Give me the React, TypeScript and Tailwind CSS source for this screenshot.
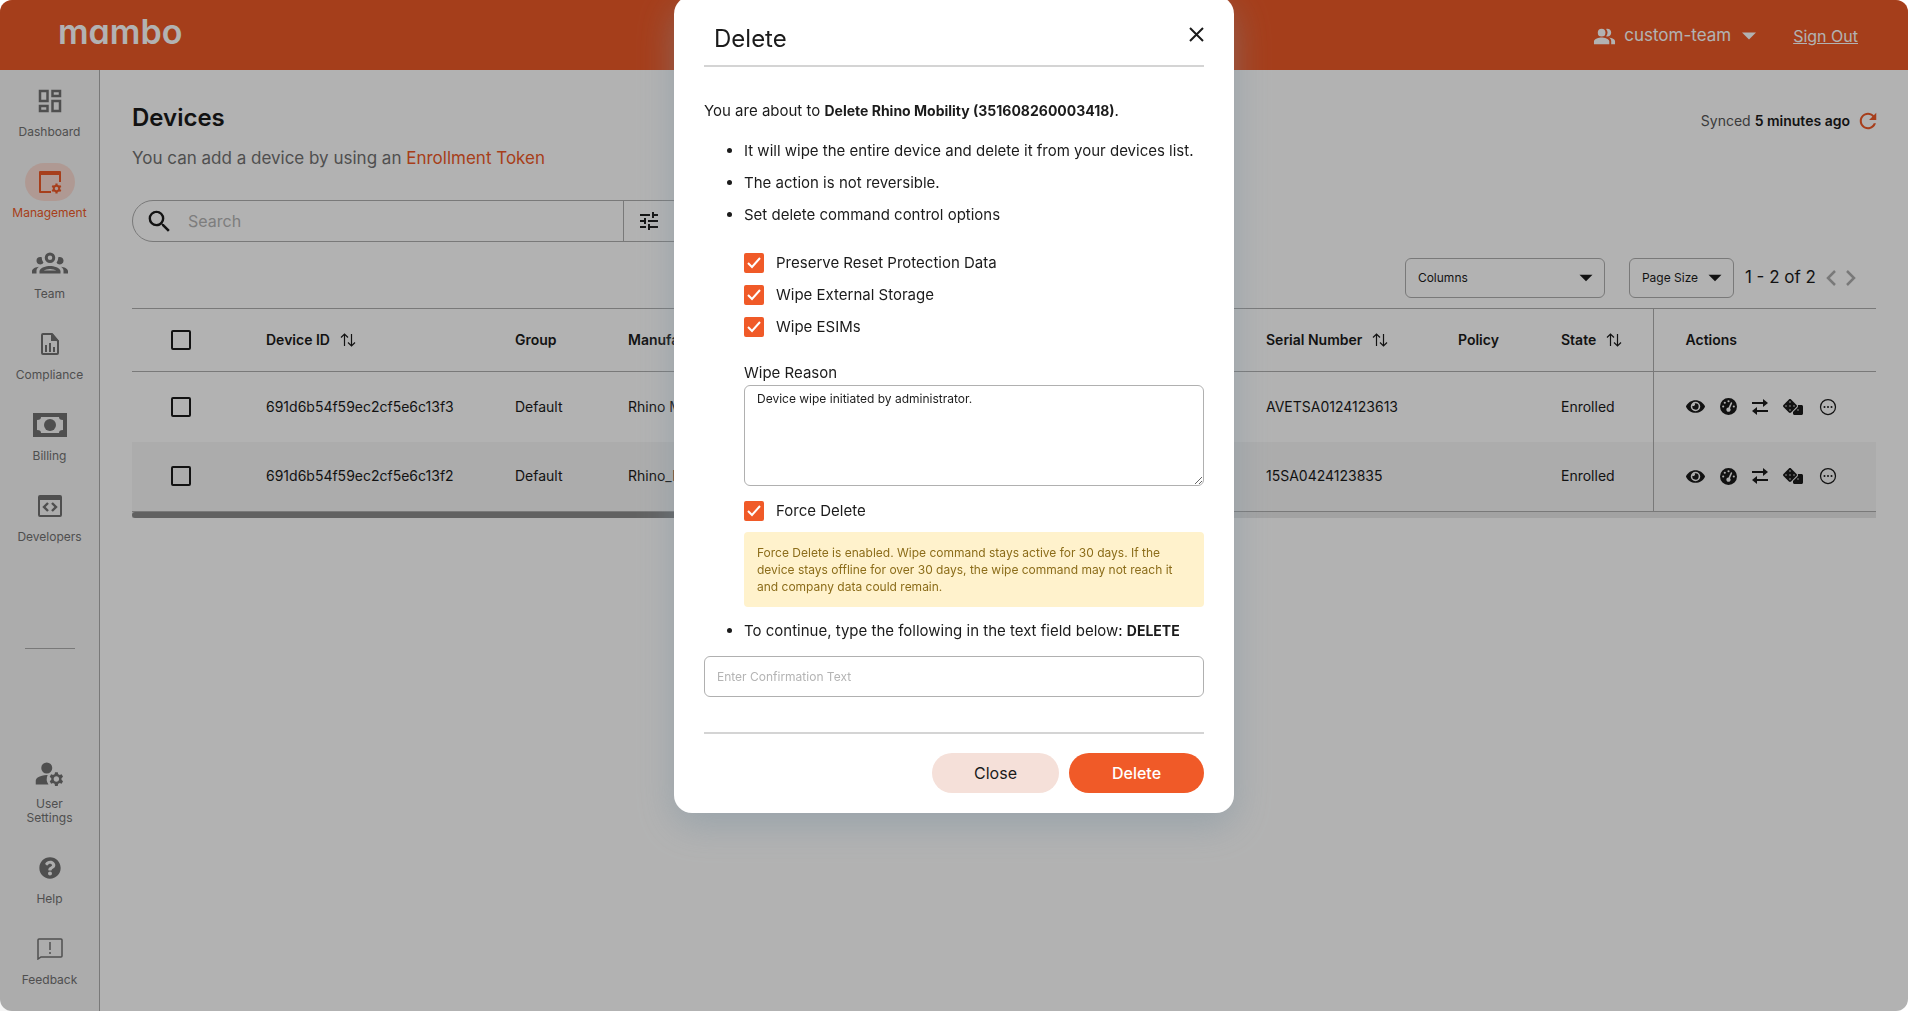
import React, { useState } from 'react';
import { FaDice, FaEye, FaQuestionCircle } from 'react-icons/fa';
import { FaGaugeHigh } from 'react-icons/fa6';
import { IoMdArrowDropdown, IoMdRefresh } from 'react-icons/io';
import { IoEllipsisHorizontalCircleOutline } from 'react-icons/io5';
import {
  MdManageAccounts,
  MdOutlineDashboard,
  MdPeopleAlt,
  MdSearch,
  MdTune,
} from 'react-icons/md';

interface NavItemProps {
  label: string;
  icon: React.ReactNode;
  active?: boolean;
}

interface Device {
  id: string;
  group: string;
  manufacturer: string;
  serial: string;
  state: string;
}

const devices: Device[] = [
  {
    id: '691d6b54f59ec2cf5e6c13f3',
    group: 'Default',
    manufacturer: 'Rhino Mobility',
    serial: 'AVETSA0124123613',
    state: 'Enrolled',
  },
  {
    id: '691d6b54f59ec2cf5e6c13f2',
    group: 'Default',
    manufacturer: 'Rhino_Mobility',
    serial: '15SA0424123835',
    state: 'Enrolled',
  },
];

function ManagementIcon() {
  return (
    <svg width="24" height="24" viewBox="0 0 24 24" fill="currentColor">
      <path d="M2 1h20a1 1 0 0 1 1 1v10h-2V5H3v16h10v2H2a1 1 0 0 1-1-1V2a1 1 0 0 1 1-1z" />
      <circle cx="18.500" cy="18.500" r="2.700" fill="none" stroke="currentColor" strokeWidth="2" />
      <path
        d="M18.500 13.500v2M18.500 21.500v2M14.200 16l1.700 1M21.100 20l1.700 1M14.200 21l1.700-1M21.100 17l1.700-1"
        stroke="currentColor"
        strokeWidth="2.200"
      />
    </svg>
  );
}

function TeamIcon() {
  return (
    <svg width="36" height="36" viewBox="0 0 24 24" fill="currentColor">
      <path d="M12 5a3.500 3.500 0 1 0 0 7 3.500 3.500 0 0 0 0-7m0 2a1.500 1.500 0 1 1 0 3 1.500 1.500 0 0 1 0-3M5.500 8A2.500 2.500 0 0 0 3 10.500c0 .940.530 1.750 1.290 2.180.360.200.770.320 1.210.320s.850-.120 1.210-.320c.370-.210.680-.510.910-.870A5.420 5.420 0 0 1 6.500 8.220C6.200 8.080 5.860 8 5.500 8m13 0c-.360 0-.700.080-1 .220a5.420 5.420 0 0 1-1.120 3.590c.230.360.540.660.910.870.360.200.770.320 1.210.320s.850-.120 1.210-.320A2.500 2.500 0 0 0 18.500 8M12 14c-2.340 0-7 1.170-7 3.500V19h14v-1.500c0-2.330-4.660-3.500-7-3.500m-7.290.550C2.780 14.780 0 15.760 0 17.500V19h3v-1.930c0-1.010.690-1.850 1.710-2.520m14.580 0c1.020.670 1.710 1.510 1.710 2.520V19h3v-1.500c0-1.740-2.780-2.720-4.710-2.950M12 16c1.530 0 3.240.500 4.230 1H7.770c.990-.500 2.700-1 4.230-1z" />
    </svg>
  );
}

function ComplianceIcon() {
  return (
    <svg width="18" height="22" viewBox="0 0 18 22">
      <path d="M2 1h9l6 7v12a1 1 0 0 1-1 1H2a1 1 0 0 1-1-1V2a1 1 0 0 1 1-1z" fill="none" stroke="currentColor" strokeWidth="2" />
      <path d="M10 1h2l6 7h-8zM4 12h2v7H4zM8 10h2v9H8zM12 14h2v5h-2z" fill="currentColor" />
    </svg>
  );
}

function BillingIcon() {
  return (
    <svg width="34" height="24" viewBox="0 0 34 24" fill="currentColor">
      <path
        fillRule="evenodd"
        d="M0 0h34v24H0zM8 4c0 2-1 3-4 3v10c3 0 4 1 4 3h18c0-2 1-3 4-3V7c-3 0-4-1-4-3z"
      />
      <circle cx="17" cy="12" r="6" />
    </svg>
  );
}

function DevelopersIcon() {
  return (
    <svg width="24" height="22" viewBox="0 0 24 22" fill="none" stroke="currentColor" strokeWidth="2">
      <rect x="1" y="1" width="22" height="20" rx="1" />
      <path d="M1 3h22" strokeWidth="4" />
      <path d="M10 8l-4 4 4 4M14 8l4 4-4 4" strokeWidth="2.400" />
    </svg>
  );
}

function FeedbackIcon() {
  return (
    <svg width="26" height="22" viewBox="0 0 26 22" fill="none" stroke="currentColor" strokeWidth="1.500">
      <path d="M1 21V2a1 1 0 0 1 1-1h22a1 1 0 0 1 1 1v16a1 1 0 0 1-1 1H4z" />
      <path d="M13 4v8M13 14v2" />
    </svg>
  );
}

function TransferIcon() {
  return (
    <svg width="16" height="16" viewBox="0 0 16 16" fill="currentColor">
      <path d="M0 3h11V0l5 4-5 4V5H0zM16 11H5V8l-5 4 5 4v-3h11z" />
    </svg>
  );
}

function SortIcon() {
  return (
    <svg width="16" height="14" viewBox="0 0 16 14" fill="none" stroke="currentColor" strokeWidth="1.200">
      <path d="M4.500 13V1M1 4.500L4.500 1 8 4.500M11.500 1v12M8 9.500l3.500 3.500L15 9.500" />
    </svg>
  );
}

function Chevron({ direction }: { direction: 'left' | 'right' }) {
  return (
    <svg width="10" height="16" viewBox="0 0 10 16" fill="none" stroke="currentColor" strokeWidth="2.500">
      {direction === 'left' ? <path d="M9 1L2 8l7 7" /> : <path d="M1 1l7 7-7 7" />}
    </svg>
  );
}

function NavItem({ label, icon, active }: NavItemProps) {
  return (
    <a
      href="#"
      className={
        active
          ? 'flex flex-col items-center gap-[5px] px-3 text-[#f05a28]'
          : 'flex flex-col items-center gap-[5px] px-3 text-[#727272]'
      }
    >
      <span
        className={
          active
            ? 'flex h-[38px] w-[50px] items-center justify-center rounded-full bg-[#fbdcd3]'
            : 'flex h-[38px] w-[50px] items-center justify-center'
        }
      >
        {icon}
      </span>
      <span className="text-center text-xs leading-[14px]">{label}</span>
    </a>
  );
}

function Header() {
  return (
    <header className="flex h-[70px] items-center justify-between rounded-t-xl bg-[#ec5927] pr-[50px] pl-[58px] text-white">
      <div className="pb-[6px] text-[34px] leading-none font-semibold [font-feature-settings:'cv11']">
        mambo
      </div>
      <div className="flex items-center pt-[2px]">
        <button type="button" className="flex items-center text-[17px]">
          <MdPeopleAlt size={23} className="mr-2" />
          custom-team
          <IoMdArrowDropdown size={28} className="ml-1" />
        </button>
        <a href="#" className="ml-[30px] text-base underline">
          Sign Out
        </a>
      </div>
    </header>
  );
}

function Sidebar() {
  return (
    <nav className="flex w-[100px] shrink-0 flex-col items-center border-r border-[#aeaeae] bg-[#f6f6f6] pt-3 pb-6">
      <div className="flex w-full flex-col gap-6">
        <NavItem label="Dashboard" icon={<MdOutlineDashboard size={30} />} />
        <NavItem label="Management" icon={<ManagementIcon />} active />
        <NavItem label="Team" icon={<TeamIcon />} />
        <NavItem label="Compliance" icon={<ComplianceIcon />} />
        <NavItem label="Billing" icon={<BillingIcon />} />
        <NavItem label="Developers" icon={<DevelopersIcon />} />
      </div>
      <hr className="my-[104px] w-[50px] border-[#aeaeae]" />
      <div className="mt-auto flex w-[76px] flex-col gap-6">
        <NavItem label="User Settings" icon={<MdManageAccounts size={33} />} />
        <NavItem label="Help" icon={<FaQuestionCircle size={22} />} />
        <NavItem label="Feedback" icon={<FeedbackIcon />} />
      </div>
    </nav>
  );
}

function TableCheckbox({ label }: { label: string }) {
  return (
    <input
      type="checkbox"
      aria-label={label}
      className="mx-auto block size-5 appearance-none rounded-xs border-2 border-[#1b1b1b]"
    />
  );
}

function DeviceTable() {
  return (
    <div className="mt-[10px]">
      <table className="w-full table-fixed text-left text-sm text-[#1b1b1b]">
        <colgroup>
          <col className="w-[122px]" />
          <col className="w-[249px]" />
          <col className="w-[113px]" />
          <col />
          <col className="w-[192px]" />
          <col className="w-[103px]" />
          <col className="w-[104px]" />
          <col className="w-[223px]" />
        </colgroup>
        <thead>
          <tr className="h-[63px] border-y border-[#aeaeae]">
            <th className="pr-6">
              <TableCheckbox label="Select all devices" />
            </th>
            <th className="px-3 font-semibold">
              <span className="flex items-center gap-[10px]">
                Device ID <SortIcon />
              </span>
            </th>
            <th className="px-3 font-semibold">Group</th>
            <th className="px-3 font-semibold">Manufacturer</th>
            <th className="px-3 font-semibold">
              <span className="flex items-center gap-[10px]">
                Serial Number <SortIcon />
              </span>
            </th>
            <th className="px-3 font-semibold">Policy</th>
            <th className="px-3 font-semibold">
              <span className="flex items-center gap-[10px]">
                State <SortIcon />
              </span>
            </th>
            <th className="border-l border-[#aeaeae] pl-8 font-semibold">Actions</th>
          </tr>
        </thead>
        <tbody>
          {devices.map((device) => (
            <tr key={device.id} className="h-[70px] last:border-b last:border-[#aeaeae] even:bg-[#f6f6f6]">
              <td className="pr-6">
                <TableCheckbox label={`Select ${device.id}`} />
              </td>
              <td className="px-3">{device.id}</td>
              <td className="px-3">{device.group}</td>
              <td className="px-3">{device.manufacturer}</td>
              <td className="px-3">{device.serial}</td>
              <td className="px-3" />
              <td className="px-3">{device.state}</td>
              <td className="border-l border-[#aeaeae] pl-8">
                <div className="flex items-center gap-[15px]">
                  <button type="button" aria-label="View"><FaEye size={19} /></button>
                  <button type="button" aria-label="Dashboard"><FaGaugeHigh size={17} /></button>
                  <button type="button" aria-label="Transfer"><TransferIcon /></button>
                  <button type="button" aria-label="Randomize"><FaDice size={20} /></button>
                  <button type="button" aria-label="More"><IoEllipsisHorizontalCircleOutline size={20} /></button>
                </div>
              </td>
            </tr>
          ))}
        </tbody>
      </table>
      <div className="h-[6px] bg-[#e8e8e8]">
        <div className="h-full w-3/5 rounded-l-full bg-[#8c8c8c]" />
      </div>
    </div>
  );
}

function DevicesPage() {
  return (
    <main className="flex-1 px-8">
      <div className="flex justify-between pt-8">
        <div>
          <h1 className="text-2xl leading-8 font-semibold text-[#1b1b1b]">Devices</h1>
          <p className="mt-3 text-[17px] leading-6 text-[#727272]">
            You can add a device by using an{' '}
            <a href="#" className="text-[#f05a28]">Enrollment Token</a>
          </p>
        </div>
        <div className="mt-[7px] -mr-1 flex h-6 items-center text-sm text-[#555555]">
          Synced&nbsp;<strong className="font-semibold text-[#1b1b1b]">5 minutes ago</strong>
          <button type="button" aria-label="Refresh" className="ml-[6px] text-[#f05a28]">
            <IoMdRefresh size={24} />
          </button>
        </div>
      </div>

      <div className="mt-[30px] flex h-[42px] w-[562px] rounded-full border border-[#aeaeae]">
        <label htmlFor="search" className="flex w-[55px] items-center pl-3 text-[#1b1b1b]">
          <MdSearch size={29} />
        </label>
        <input
          id="search"
          type="text"
          placeholder="Search"
          className="flex-1 text-base placeholder:text-[#b4b4b4]"
        />
        <button type="button" aria-label="Filter" className="w-[70px] border-l border-[#aeaeae] pl-[13px] text-[#1b1b1b]">
          <MdTune size={24} />
        </button>
      </div>

      <div className="mt-4 flex items-center justify-end pr-5">
        <button type="button" className="flex h-10 w-[200px] items-center justify-between rounded-md border border-[#aeaeae] pr-[5px] pl-3 text-xs text-[#1b1b1b]">
          Columns
          <IoMdArrowDropdown size={26} />
        </button>
        <button type="button" className="ml-6 flex h-10 w-[105px] items-center justify-between rounded-md border border-[#aeaeae] pr-[5px] pl-3 text-xs text-[#1b1b1b]">
          Page Size
          <IoMdArrowDropdown size={26} />
        </button>
        <span className="ml-[11px] text-[17px] text-[#1b1b1b]">1 - 2 of 2</span>
        <div className="ml-[10px] flex gap-[10px] text-[#aeaeae]">
          <button type="button" aria-label="Previous page"><Chevron direction="left" /></button>
          <button type="button" aria-label="Next page"><Chevron direction="right" /></button>
        </div>
      </div>

      <DeviceTable />
    </main>
  );
}

function OptionCheckbox({ label }: { label: string }) {
  const [checked, setChecked] = useState(true);

  return (
    <label className="flex h-8 items-center gap-3">
      <span className="grid size-5 place-items-center">
        <input
          type="checkbox"
          checked={checked}
          onChange={(e) => setChecked(e.target.checked)}
          className="col-start-1 row-start-1 size-5 appearance-none rounded-xs border-2 border-[#f05a28] checked:bg-[#f05a28]"
        />
        {checked && (
          <svg width="14" height="12" viewBox="0 0 14 12" className="pointer-events-none col-start-1 row-start-1" fill="none" stroke="#ffffff" strokeWidth="2">
            <path d="M1 6l4 4 8-9" />
          </svg>
        )}
      </span>
      {label}
    </label>
  );
}

function DeleteDialog() {
  const [reason, setReason] = useState('Device wipe initiated by administrator.');
  const [confirmation, setConfirmation] = useState('');

  return (
    <div className="fixed inset-0 flex items-start justify-center overflow-hidden rounded-xl bg-black/30">
      <div
        role="dialog"
        aria-labelledby="dialog-title"
        className="-mt-1 w-[560px] rounded-[18px] bg-white px-[30px] pt-4 pb-5 text-[15px] leading-8 text-[#1b1b1b] shadow-[0_12px_36px_rgba(120,145,160,0.45)]"
      >
        <div className="flex h-[55px] items-center justify-between border-b-2 border-[#d4d4d4] pl-[10px]">
          <h2 id="dialog-title" className="text-2xl">Delete</h2>
          <button type="button" aria-label="Close dialog" className="pb-2">
            <svg width="15" height="15" viewBox="0 0 15 15" fill="none" stroke="currentColor" strokeWidth="2">
              <path d="M1 1l13 13M14 1L1 14" />
            </svg>
          </button>
        </div>

        <p className="mt-7">
          You are about to <strong className="text-sm font-bold">Delete Rhino Mobility (351608260003418)</strong>.
        </p>
        <ul className="mt-2 list-disc pl-10">
          <li>It will wipe the entire device and delete it from your devices list.</li>
          <li>The action is not reversible.</li>
          <li>Set delete command control options</li>
        </ul>

        <div className="mt-4 pl-10">
          <OptionCheckbox label="Preserve Reset Protection Data" />
          <OptionCheckbox label="Wipe External Storage" />
          <OptionCheckbox label="Wipe ESIMs" />
          <label htmlFor="wipe-reason" className="mt-[18px] block leading-6">Wipe Reason</label>
          <textarea
            id="wipe-reason"
            value={reason}
            onChange={(e) => setReason(e.target.value)}
            className="block h-[101px] w-full resize-y rounded-md border border-[#b0b0b0] px-3 py-1 text-xs leading-[18px]"
          />
          <div className="mt-[9px]">
            <OptionCheckbox label="Force Delete" />
          </div>
          <p className="mt-[5px] rounded-sm bg-[#fff2cc] px-[13px] py-3 text-xs leading-[17px] text-[#8c6d1a]">
            Force Delete is enabled. Wipe command stays active for 30 days. If the device stays
            offline for over 30 days, the wipe command may not reach it and company data could
            remain.
          </p>
        </div>

        <ul className="mt-2 list-disc pl-10">
          <li>
            <label htmlFor="confirmation">
              To continue, type the following in the text field below: <strong className="text-sm font-bold">DELETE</strong>
            </label>
          </li>
        </ul>
        <input
          id="confirmation"
          type="text"
          value={confirmation}
          onChange={(e) => setConfirmation(e.target.value)}
          placeholder="Enter Confirmation Text"
          className="mt-[9px] block h-[41px] w-full rounded-md border border-[#b0b0b0] px-3 text-xs placeholder:text-[#b4b4b4]"
        />

        <div className="mt-[35px] flex justify-end gap-[10px] border-t-2 border-[#d4d4d4] pt-[19px]">
          <button type="button" className="h-10 w-[127px] rounded-full bg-[#f5e0d9] text-base">
            Close
          </button>
          <button type="button" className="h-10 w-[135px] rounded-full bg-[#f05a28] text-base font-medium text-white">
            Delete
          </button>
        </div>
      </div>
    </div>
  );
}

export default function App() {
  return (
    <div className="flex min-h-screen flex-col rounded-xl bg-white font-[Inter,sans-serif]">
      <Header />
      <div className="flex flex-1">
        <Sidebar />
        <DevicesPage />
      </div>
      <DeleteDialog />
    </div>
  );
}
